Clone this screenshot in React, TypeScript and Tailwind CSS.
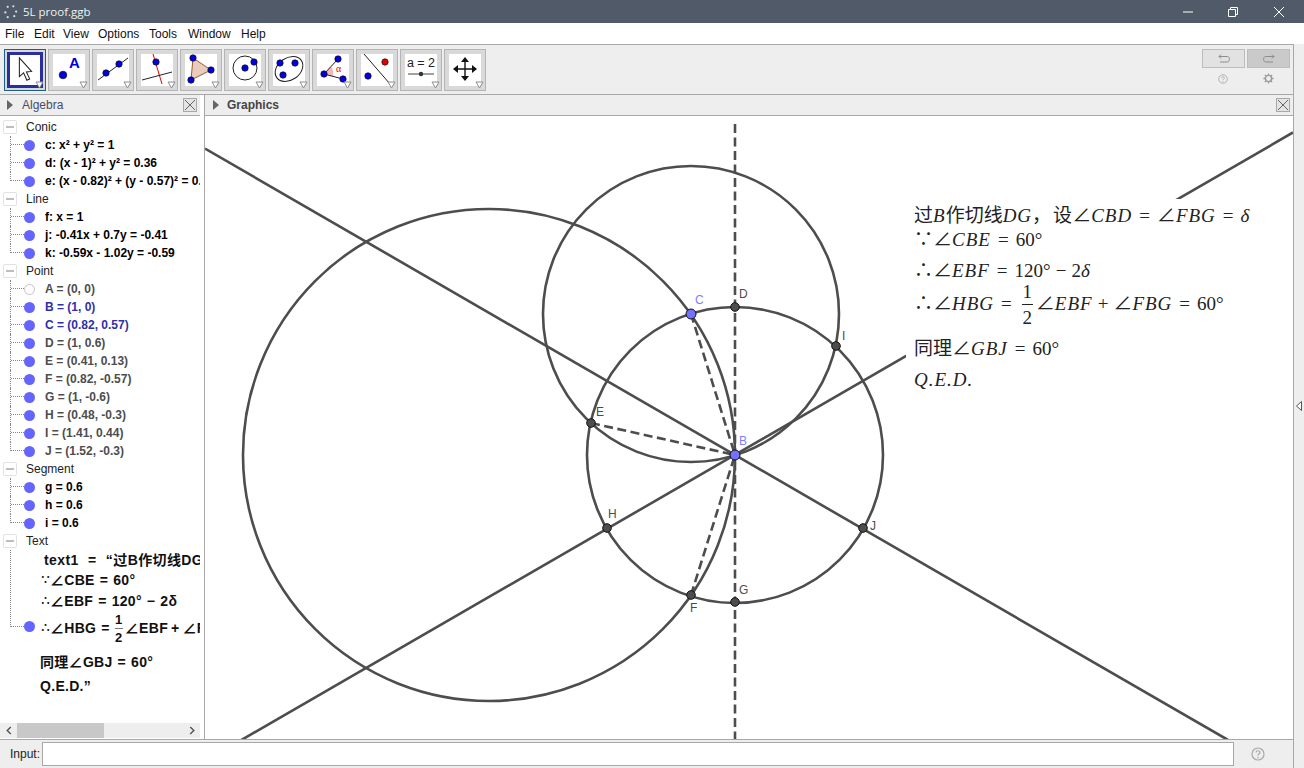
import type { ReactNode } from 'react';

const SANS = 'font-["Liberation_Sans",Arial,sans-serif]';

type AlgebraRow = { text: ReactNode; color?: string; hollow?: boolean };

const pointColor = 'text-[#4d4d4d]';
const freeColor = 'text-[#2f2fa8]';

const groups: { name: string; rows: AlgebraRow[] }[] = [
  {
    name: 'Conic',
    rows: [
      { text: 'c: x² + y² = 1' },
      { text: 'd: (x - 1)² + y² = 0.36' },
      { text: 'e: (x - 0.82)² + (y - 0.57)² = 0.36' },
    ],
  },
  {
    name: 'Line',
    rows: [{ text: 'f: x = 1' }, { text: 'j: -0.41x + 0.7y = -0.41' }, { text: 'k: -0.59x - 1.02y = -0.59' }],
  },
  {
    name: 'Point',
    rows: [
      { text: 'A = (0, 0)', color: pointColor, hollow: true },
      { text: 'B = (1, 0)', color: freeColor },
      { text: 'C = (0.82, 0.57)', color: freeColor },
      { text: 'D = (1, 0.6)', color: pointColor },
      { text: 'E = (0.41, 0.13)', color: pointColor },
      { text: 'F = (0.82, -0.57)', color: pointColor },
      { text: 'G = (1, -0.6)', color: pointColor },
      { text: 'H = (0.48, -0.3)', color: pointColor },
      { text: 'I = (1.41, 0.44)', color: pointColor },
      { text: 'J = (1.52, -0.3)', color: pointColor },
    ],
  },
  {
    name: 'Segment',
    rows: [{ text: 'g = 0.6' }, { text: 'h = 0.6' }, { text: 'i = 0.6' }],
  },
];

const canvasPoints = [
  { x: 735, y: 307, label: 'D', lx: 739, ly: 298 },
  { x: 591, y: 423, label: 'E', lx: 596, ly: 416 },
  { x: 691, y: 595, label: 'F', lx: 690, ly: 612 },
  { x: 735, y: 602, label: 'G', lx: 739, ly: 594 },
  { x: 607, y: 528, label: 'H', lx: 608, ly: 518 },
  { x: 836, y: 346, label: 'I', lx: 842, ly: 340 },
  { x: 863, y: 528, label: 'J', lx: 870, ly: 530 },
];

const menuItems = [
  { name: 'File', width: 'w-[29px]' },
  { name: 'Edit', width: 'w-[29px]' },
  { name: 'View', width: 'w-[35px]' },
  { name: 'Options', width: 'w-[51px]' },
  { name: 'Tools', width: 'w-[39px]' },
  { name: 'Window', width: 'w-[53px]' },
  { name: 'Help', width: 'w-[30px]' },
];

function Dot({ x, y, fill = '#0000e0', r = 3.2 }: { x: number; y: number; fill?: string; r?: number }) {
  return <circle cx={x} cy={y} r={r} fill={fill} stroke="#111" strokeWidth="0.7" />;
}

function ToolButton({ children, selected }: { children: ReactNode; selected?: boolean }) {
  return (
    <div
      className={`relative flex h-[42px] w-[42px] shrink-0 items-center justify-center border bg-[#d9d9d9] ${
        selected ? 'border-[#1d5f8c]' : 'border-[#b4b4b4]'
      }`}
    >
      <div
        className={`bg-white ${selected ? 'h-[36px] w-[36px] border-[3px] border-[#2a2f9f]' : 'h-[32px] w-[32px]'}`}
      >
        <svg viewBox="0 0 32 32" className={selected ? 'h-[30px] w-[30px]' : 'h-[32px] w-[32px]'}>
          {children}
        </svg>
      </div>
      <svg viewBox="0 0 9 8" className="absolute bottom-[1px] right-[1px] h-[8px] w-[9px]">
        <path d="M1 1H8L4.5 7Z" fill="#fff" stroke="#8c8c8c" />
      </svg>
    </div>
  );
}

function CloseBox() {
  return (
    <div className="flex h-[14px] w-[14px] items-center justify-center border border-[#a8a8a8] bg-[#e4e4e4]">
      <svg viewBox="0 0 12 12" className="h-[12px] w-[12px]">
        <path d="M1 1L11 11M11 1L1 11" stroke="#666" strokeWidth="1" />
      </svg>
    </div>
  );
}

function PanelArrow() {
  return (
    <svg viewBox="0 0 6 10" className="h-[10px] w-[6px] shrink-0">
      <path d="M0 0L6 5L0 10Z" fill="#666" />
    </svg>
  );
}

function HelpIcon({ className }: { className: string }) {
  return (
    <svg viewBox="0 0 14 14" className={className}>
      <circle cx="7" cy="7" r="6" fill="none" stroke="#a8a8a8" strokeWidth="1.2" />
      <path d="M5 5.4C5 3.2 9 3.2 9 5.4C9 6.8 7 6.8 7 8.6" fill="none" stroke="#a8a8a8" strokeWidth="1.2" />
      <circle cx="7" cy="10.6" r="0.8" fill="#a8a8a8" />
    </svg>
  );
}

function Connector({ last }: { last?: boolean }) {
  return (
    <span
      className={`ml-[10px] w-[14px] shrink-0 self-start border-l border-dotted border-[#888] ${last ? 'h-[9px]' : 'h-[18px]'}`}
    >
      <span className="block h-[9px] border-b border-dotted border-[#888]" />
    </span>
  );
}

function Bullet({ hollow }: { hollow?: boolean }) {
  return (
    <span
      className={`block h-[11px] w-[11px] shrink-0 rounded-full ${hollow ? 'border border-[#c4c4c4] bg-white' : 'bg-[#6464ff]'}`}
    />
  );
}

function GroupHeader({ name }: { name: string }) {
  return (
    <div className="flex h-[18px] items-center pl-[3px]">
      <span className="flex h-[14px] w-[14px] items-center justify-center rounded-[2px] border border-[#e2e2e2]">
        <span className="h-[2px] w-[8px] bg-[#bdbdbd]" />
      </span>
      <span className="ml-[9px] text-[12px] text-[#222]">{name}</span>
    </div>
  );
}

function AlgebraPanel() {
  return (
    <div className="flex w-[205px] shrink-0 flex-col border-r border-[#a8a8a8] bg-white pr-[4px]">
      <div className="flex h-[21px] shrink-0 items-center border-b border-[#a8a8a8] bg-[#eeeeee] pl-[7px] pr-[3px]">
        <PanelArrow />
        <span className="ml-[9px] flex-1 text-[12px] text-[#4a4a66]">Algebra</span>
        <CloseBox />
      </div>
      <div className="min-h-0 flex-1 overflow-hidden whitespace-nowrap pt-[2px]">
        {groups.map((g) => (
          <div key={g.name}>
            <GroupHeader name={g.name} />
            {g.rows.map((row, i) => (
              <div key={i} className="flex h-[18px] items-center">
                <Connector last={i === g.rows.length - 1} />
                <Bullet hollow={row.hollow} />
                <span className={`ml-[10px] text-[12px] font-bold ${row.color ?? 'text-black'}`}>{row.text}</span>
              </div>
            ))}
          </div>
        ))}
        <GroupHeader name="Text" />
        <div className="flex items-start">
          <span className="ml-[10px] h-[77px] w-[14px] shrink-0 border-b border-l border-dotted border-[#888]" />
          <div className="mt-[71px] flex shrink-0">
            <Bullet />
          </div>
          <div className='min-w-0 flex-1 overflow-hidden font-["Liberation_Sans","Noto_Sans_CJK_SC",sans-serif] text-[14px] font-bold leading-none text-[#111]'>
            <div className="ml-[9px] mt-[3px] h-[17px] tracking-[0.4px]">
              text1 <span className="mx-[5px]">=</span> “过B作切线DG
            </div>
            <div className="ml-[5px] flex h-[20px] items-center tracking-[0.3px]">
              <span className="w-[10px] text-[11px]">∵</span>∠CBE<span className="mx-[5px]">=</span>60°
            </div>
            <div className="ml-[5px] flex h-[22px] items-center tracking-[0.3px]">
              <span className="w-[10px] text-[11px]">∴</span>∠EBF<span className="mx-[5px]">=</span>120°
              <span className="mx-[5px]">−</span>2δ
            </div>
            <div className="ml-[5px] flex h-[32px] items-center tracking-[0.3px]">
              <span className="w-[10px] text-[11px]">∴</span>∠HBG<span className="mx-[5px]">=</span>
              <span className="mr-[2px] flex flex-col items-center text-[13px]">
                <span>1</span>
                <span className="my-[2px] h-px w-[8px] bg-[#777]" />
                <span>2</span>
              </span>
              ∠EBF<span className="mx-[3px]">+</span>∠F
            </div>
            <div className="ml-[5px] mt-[6px] flex h-[24px] items-center tracking-[0.3px]">
              同理∠GBJ<span className="mx-[5px]">=</span>60°
            </div>
            <div className="ml-[5px] flex h-[24px] items-center tracking-[0.3px]">Q.E.D.”</div>
          </div>
        </div>
      </div>
      <div className="mb-[1px] flex h-[15px] shrink-0 items-center bg-[#eeeeee]">
        <span className="flex w-[17px] justify-center">
          <svg viewBox="0 0 6 10" className="h-[9px] w-[6px]">
            <path d="M5 1L1 5L5 9" fill="none" stroke="#555" strokeWidth="1.6" />
          </svg>
        </span>
        <span className="h-full w-[87px] bg-[#c8c8c8]" />
        <span className="flex flex-1 justify-end pr-[5px]">
          <svg viewBox="0 0 6 10" className="h-[9px] w-[6px]">
            <path d="M1 1L5 5L1 9" fill="none" stroke="#555" strokeWidth="1.6" />
          </svg>
        </span>
      </div>
    </div>
  );
}

function Frac() {
  return (
    <span className="mx-[3px] inline-flex flex-col items-center not-italic leading-none">
      <span>1</span>
      <span className="my-[3px] h-px w-[11px] bg-[#222]" />
      <span>2</span>
    </span>
  );
}

function Eq() {
  return <span className="mx-[7px]">=</span>;
}

function Var({ children }: { children: ReactNode }) {
  return <i className="tracking-[1px]">{children}</i>;
}

function MathNote() {
  return (
    <div className='absolute left-[701px] top-[83px] h-[202px] w-[352px] whitespace-nowrap bg-white pl-[8px] font-["Liberation_Serif","Noto_Sans_CJK_SC",serif] text-[19px] text-[#222]'>
      <div className="mt-[5px] flex h-[24px] items-center">
        过<Var>B</Var>作切线<Var>DG</Var>，<span className="ml-[2px]">设</span>∠<Var>CBD</Var>
        <Eq />∠<Var>FBG</Var>
        <Eq />
        <Var>δ</Var>
      </div>
      <div className="flex h-[24px] items-center">
        <span className="w-[19px]">∵</span>∠<Var>CBE</Var>
        <Eq />
        60°
      </div>
      <div className="mt-[7px] flex h-[24px] items-center">
        <span className="w-[19px]">∴</span>∠<Var>EBF</Var>
        <Eq />
        120°<span className="mx-[5px]">−</span>2<Var>δ</Var>
      </div>
      <div className="flex h-[42px] items-center">
        <span className="w-[19px]">∴</span>∠<Var>HBG</Var>
        <Eq />
        <Frac />∠<Var>EBF</Var>
        <span className="mx-[5px]">+</span>∠<Var>FBG</Var>
        <Eq />
        60°
      </div>
      <div className="mt-[12px] flex h-[24px] items-center">
        同理∠<Var>GBJ</Var>
        <Eq />
        60°
      </div>
      <div className="mt-[7px] flex h-[24px] items-center">
        <Var>Q.E.D.</Var>
      </div>
    </div>
  );
}

function GeometryCanvas() {
  const ink = '#4d4d4d';
  return (
    <svg viewBox="205 116 1088 623" className="block h-full w-full">
      <g fill="none" stroke={ink} strokeWidth="2.6">
        <line x1="205" y1="148.6" x2="1228" y2="740" />
        <line x1="205" y1="761" x2="1293" y2="132.5" />
        <circle cx="489" cy="455" r="246" />
        <circle cx="735" cy="455" r="148" />
        <circle cx="691" cy="314" r="148" />
        <g strokeDasharray="9 4.5">
          <line x1="735" y1="124" x2="735" y2="740" />
          <line x1="691" y1="314" x2="735" y2="455" />
          <line x1="591" y1="423" x2="735" y2="455" />
          <line x1="691" y1="595" x2="735" y2="455" />
        </g>
      </g>
      {canvasPoints.map((p) => (
        <g key={p.label}>
          <circle cx={p.x} cy={p.y} r="4.3" fill="#4d4d4d" stroke="#111" strokeWidth="1" />
          <text x={p.lx} y={p.ly} fontSize="12" fill="#4d4d4d" fontFamily="Liberation Sans">
            {p.label}
          </text>
        </g>
      ))}
      <circle cx="691" cy="314" r="5" fill="#7272ff" stroke="#111" strokeWidth="1" />
      <circle cx="735" cy="455" r="5" fill="#7272ff" stroke="#111" strokeWidth="1" />
      <text x="695" y="304" fontSize="12" fill="#7f7fff" fontFamily="Liberation Sans">
        C
      </text>
      <text x="739" y="445" fontSize="12" fill="#7f7fff" fontFamily="Liberation Sans">
        B
      </text>
    </svg>
  );
}

export default function App() {
  return (
    <div className={`flex h-[768px] w-[1304px] flex-col overflow-hidden bg-[#eeeeee] ${SANS} text-[12px]`}>
      {/* window title */}
      <div className="flex h-[23px] shrink-0 items-center bg-[#505a68] text-white">
        <svg viewBox="0 0 16 16" className="ml-[3px] h-[15px] w-[15px]">
          <g fill="#d5dcf0">
            <circle cx="2.5" cy="9" r="1.2" />
            <circle cx="5" cy="3" r="1.2" />
            <circle cx="11" cy="2.5" r="1.2" />
            <circle cx="14" cy="8" r="1.2" />
            <circle cx="12" cy="13" r="1.2" />
            <circle cx="5" cy="14" r="1.2" />
          </g>
        </svg>
        <span className='ml-[5px] font-["Open_Sans",sans-serif] text-[11.5px] text-[#f2f2f2]'>5L proof.ggb</span>
        <div className="ml-auto flex items-center">
          <svg viewBox="0 0 12 12" className="mr-[33px] h-[12px] w-[12px]">
            <path d="M1 6H11" stroke="#fff" />
          </svg>
          <svg viewBox="0 0 12 12" className="mr-[34px] h-[12px] w-[12px]">
            <path d="M1.5 3.5H8.5V10.5H1.5ZM3.5 3.5V1.5H10.5V8.5H8.5" fill="none" stroke="#fff" />
          </svg>
          <svg viewBox="0 0 12 12" className="mr-[19px] h-[12px] w-[12px]">
            <path d="M1 1L11 11M11 1L1 11" stroke="#fff" />
          </svg>
        </div>
      </div>

      {/* menu */}
      <div className="flex h-[21px] shrink-0 items-center bg-white pl-[5px] text-[12px] text-[#111]">
        {menuItems.map((m) => (
          <span key={m.name} className={m.width}>
            {m.name}
          </span>
        ))}
      </div>

      <div className="flex min-h-0 flex-1">
        <div className="flex min-w-0 flex-1 flex-col">
          {/* toolbar */}
          <div className="flex h-[51px] shrink-0 items-start gap-[2px] border-y border-[#a8a8a8] bg-[#eeeeee] pl-[4px] pt-[4px]">
            <ToolButton selected>
              <path d="M10 3V23L14.5 19L18 27L21 25.5L17.5 18L23 17.5Z" fill="#fff" stroke="#222" strokeWidth="1.1" />
            </ToolButton>
            <ToolButton>
              <Dot x={10} y={21} r={3.8} />
              <text x="16" y="14" fontSize="15" fontWeight="bold" fill="#0000e0" fontFamily="Liberation Sans">
                A
              </text>
            </ToolButton>
            <ToolButton>
              <line x1="1" y1="26" x2="31" y2="4" stroke="#222" />
              <Dot x={9} y={19} />
              <Dot x={22} y={10} />
            </ToolButton>
            <ToolButton>
              <line x1="12" y1="0" x2="21" y2="30" stroke="#e00000" />
              <line x1="1" y1="26" x2="31" y2="18" stroke="#222" />
              <Dot x={15} y={8} />
            </ToolButton>
            <ToolButton>
              <path d="M8 4L26 16L6 26Z" fill="#e8cdbd" stroke="#9c5a32" />
              <Dot x={8} y={4} />
              <Dot x={26} y={16} />
              <Dot x={6} y={26} />
            </ToolButton>
            <ToolButton>
              <circle cx="16" cy="14" r="12" fill="none" stroke="#222" />
              <Dot x={16} y={14} />
              <Dot x={25} y={8} />
            </ToolButton>
            <ToolButton>
              <ellipse cx="16" cy="15" rx="15" ry="11" transform="rotate(-35 16 15)" fill="none" stroke="#222" />
              <Dot x={7} y={9} />
              <Dot x={22} y={9} />
              <Dot x={10} y={21} />
            </ToolButton>
            <ToolButton>
              <path d="M7 20L14 12.5C16 15 16.6 17.5 16 22.5Z" fill="#f5b8b8" />
              <path d="M21 5L7 20L26 25" fill="none" stroke="#222" />
              <Dot x={21} y={5} />
              <Dot x={7} y={20} />
              <Dot x={26} y={25} />
              <text x="19" y="18" fontSize="10" fill="#e00000" fontFamily="Liberation Serif">
                α
              </text>
            </ToolButton>
            <ToolButton>
              <line x1="3" y1="0" x2="29" y2="30" stroke="#222" />
              <Dot x={24} y={8} fill="#e00000" />
              <Dot x={7} y={22} />
            </ToolButton>
            <ToolButton>
              <text x="16" y="13" textAnchor="middle" fontSize="12.5" fill="#222" fontFamily="Liberation Sans">
                a = 2
              </text>
              <line x1="3" y1="20" x2="29" y2="20" stroke="#444" />
              <circle cx="16" cy="20" r="2.2" fill="#333" />
            </ToolButton>
            <ToolButton>
              <path d="M16 4V26M5 15H27" stroke="#111" strokeWidth="1.4" />
              <path d="M16 3L20 8H12ZM16 27L20 22H12ZM4 15L9 11V19ZM28 15L23 11V19Z" fill="#111" />
            </ToolButton>
            <div className="ml-auto flex flex-col items-center pr-[3px]">
              <div className="flex gap-[2px]">
                <div className="flex h-[19px] w-[43px] items-center justify-center border border-[#bdbdbd] bg-[#e2e2e2]">
                  <svg viewBox="0 0 12 10" className="h-[10px] w-[12px]">
                    <path d="M1 2.5H9.5C12 2.5 12 8 9.5 8H2" fill="none" stroke="#8c8c8c" />
                    <path d="M3 0.5L1 2.5L3 4.5" fill="none" stroke="#8c8c8c" />
                  </svg>
                </div>
                <div className="flex h-[19px] w-[43px] items-center justify-center border border-[#bdbdbd] bg-[#cacaca]">
                  <svg viewBox="0 0 12 10" className="h-[10px] w-[12px]">
                    <path d="M11 2.5H2.5C0 2.5 0 8 2.5 8H10" fill="none" stroke="#8c8c8c" />
                    <path d="M9 0.5L11 2.5L9 4.5" fill="none" stroke="#8c8c8c" />
                  </svg>
                </div>
              </div>
              <div className="mt-[5px] flex w-full items-center pl-[16px]">
                <HelpIcon className="h-[10px] w-[10px]" />
                <svg viewBox="0 0 12 12" className="ml-[35px] h-[11px] w-[11px]">
                  <circle cx="6" cy="6" r="3.4" fill="none" stroke="#9a9a9a" strokeWidth="1.6" />
                  <path d="M6 0.5V2.5M6 9.5V11.5M0.5 6H2.5M9.5 6H11.5M2 2L3.4 3.4M8.6 8.6L10 10M10 2L8.6 3.4M3.4 8.6L2 10" stroke="#9a9a9a" strokeWidth="1.4" />
                </svg>
              </div>
            </div>
          </div>

          <div className="flex min-h-0 flex-1">
            <AlgebraPanel />
            <div className="flex min-w-0 flex-1 flex-col bg-white">
              <div className="flex h-[21px] shrink-0 items-center border-b border-[#a8a8a8] bg-[#eeeeee] pl-[8px] pr-[3px]">
                <PanelArrow />
                <span className="ml-[8px] flex-1 text-[12px] font-bold text-[#444]">Graphics</span>
                <CloseBox />
              </div>
              <div className="relative min-h-0 flex-1">
                <GeometryCanvas />
                <MathNote />
              </div>
            </div>
          </div>

          {/* input bar */}
          <div className="flex h-[29px] shrink-0 items-center border-t border-[#a8a8a8] bg-[#eeeeee] pb-[1px] pl-[10px]">
            <span className="w-[32px] text-[12px] text-[#222]">Input:</span>
            <input className="h-[24px] w-[1192px] border border-[#a8a8a8] bg-white" />
            <HelpIcon className="ml-[17px] h-[14px] w-[14px]" />
          </div>
        </div>

        {/* collapsed side strip */}
        <div className="flex w-[11px] shrink-0 flex-col items-center border-l border-[#a8a8a8] bg-[#eeeeee] pt-[357px]">
          <svg viewBox="0 0 6 10" className="h-[10px] w-[6px]">
            <path d="M5.5 0.5L0.5 5L5.5 9.5Z" fill="#fff" stroke="#555" />
          </svg>
        </div>
      </div>
    </div>
  );
}
